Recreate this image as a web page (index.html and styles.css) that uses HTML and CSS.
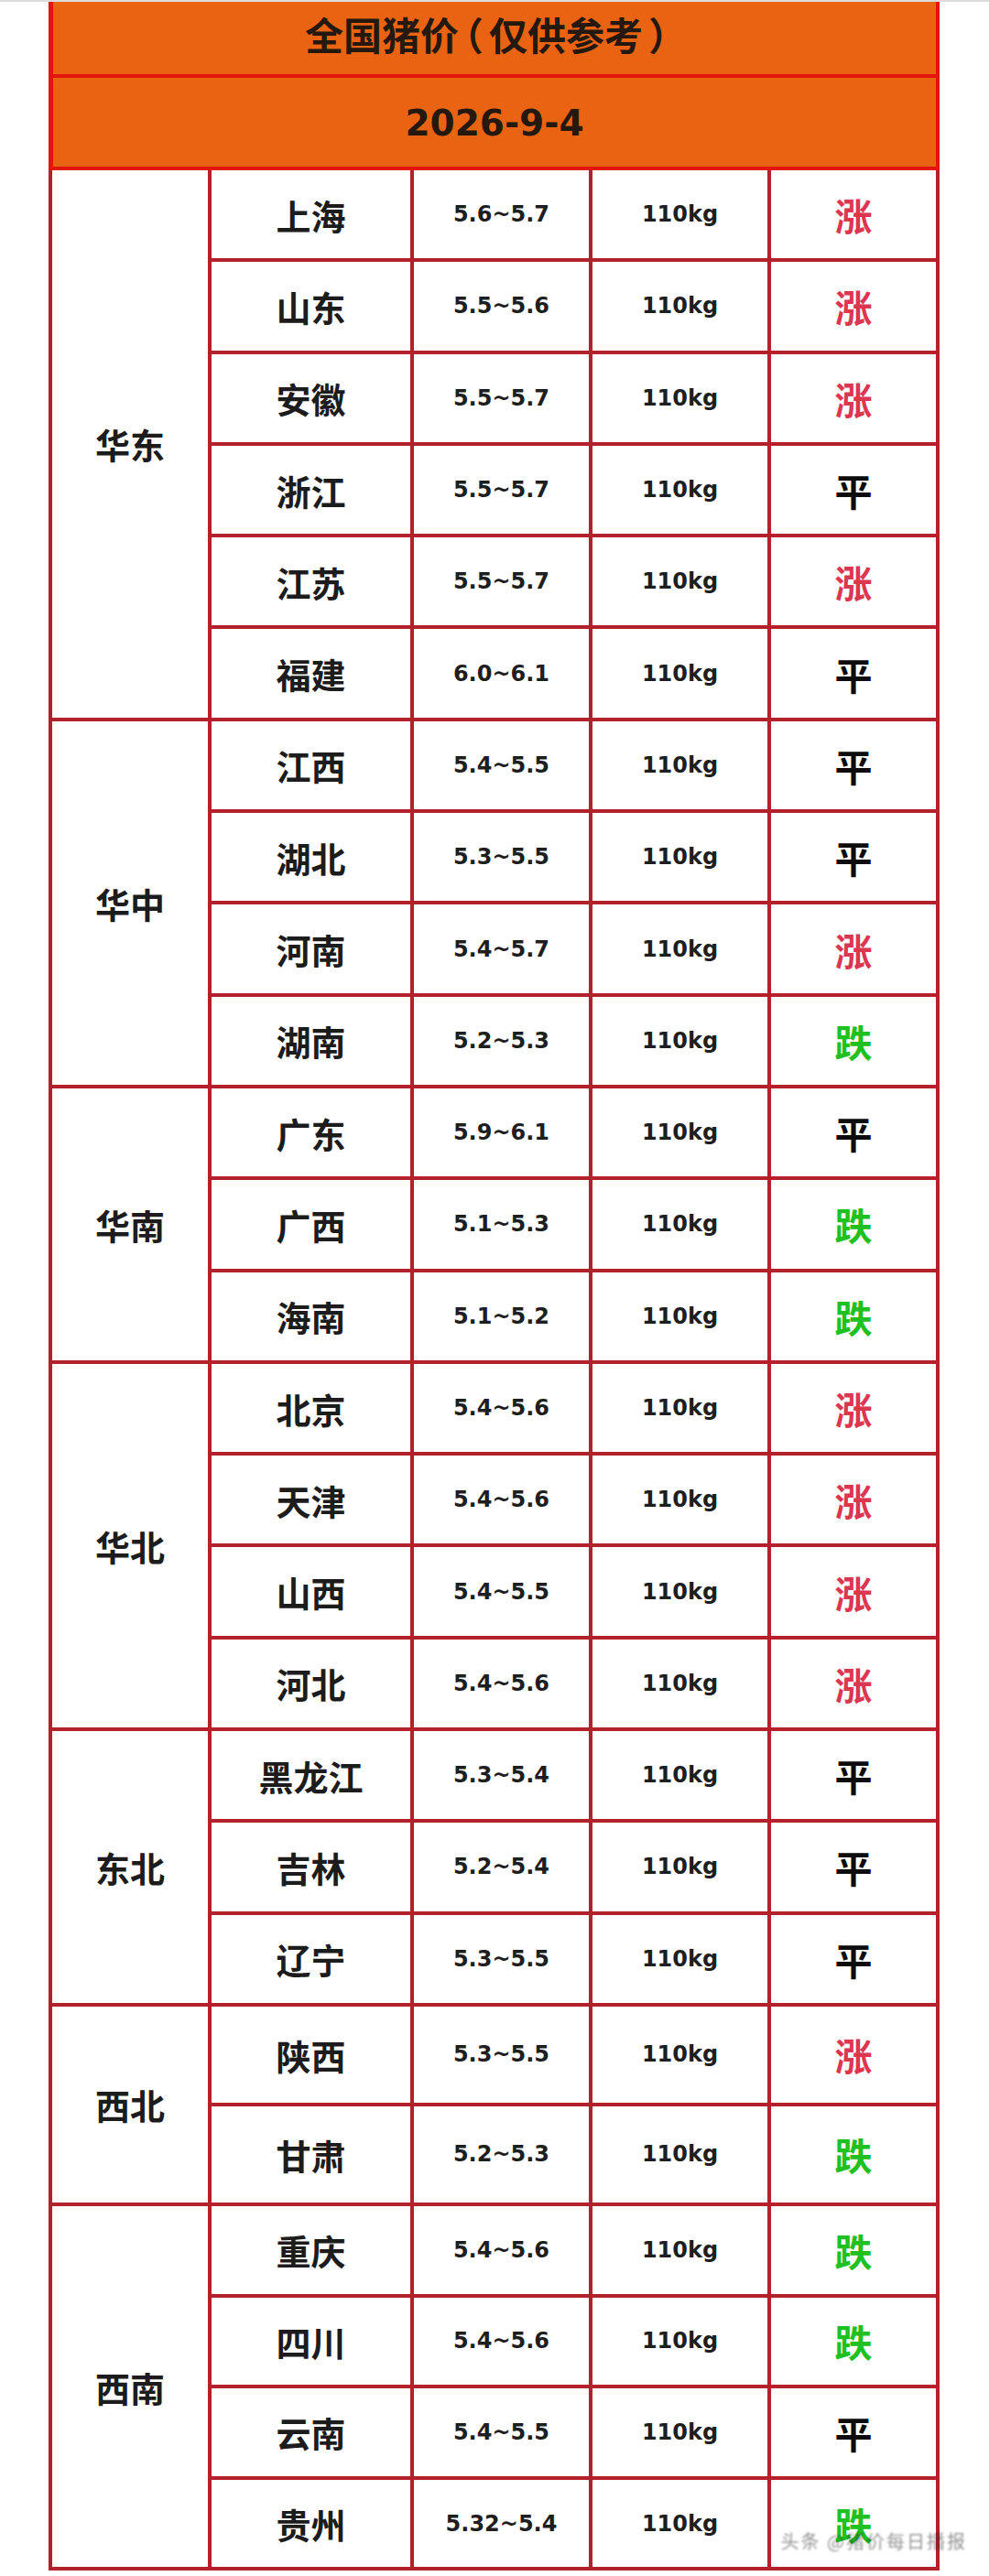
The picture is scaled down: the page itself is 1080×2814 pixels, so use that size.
FILE: index.html
```html
<!DOCTYPE html>
<html lang="zh-CN">
<head>
<meta charset="utf-8">
<title>全国猪价</title>
<link rel="stylesheet" href="styles.css">
</head>
<body>
<div class="topstrip"></div>
<div class="sheet">
  <div class="head">
    <div class="title">全国猪价<span class="pa">（</span>仅供参考<span class="pa">）</span></div>
    <div class="date">2026-9-4</div>
  </div>
  <div class="grid">
    <div class="region r6">华东</div>
    <div class="prov">上海</div><div class="num">5.6~5.7</div><div class="num">110kg</div><div class="st up">涨</div>
    <div class="prov">山东</div><div class="num">5.5~5.6</div><div class="num">110kg</div><div class="st up">涨</div>
    <div class="prov">安徽</div><div class="num">5.5~5.7</div><div class="num">110kg</div><div class="st up">涨</div>
    <div class="prov">浙江</div><div class="num">5.5~5.7</div><div class="num">110kg</div><div class="st flat">平</div>
    <div class="prov">江苏</div><div class="num">5.5~5.7</div><div class="num">110kg</div><div class="st up">涨</div>
    <div class="prov">福建</div><div class="num">6.0~6.1</div><div class="num">110kg</div><div class="st flat">平</div>

    <div class="region r4">华中</div>
    <div class="prov">江西</div><div class="num">5.4~5.5</div><div class="num">110kg</div><div class="st flat">平</div>
    <div class="prov">湖北</div><div class="num">5.3~5.5</div><div class="num">110kg</div><div class="st flat">平</div>
    <div class="prov">河南</div><div class="num">5.4~5.7</div><div class="num">110kg</div><div class="st up">涨</div>
    <div class="prov">湖南</div><div class="num">5.2~5.3</div><div class="num">110kg</div><div class="st down">跌</div>

    <div class="region r3">华南</div>
    <div class="prov">广东</div><div class="num">5.9~6.1</div><div class="num">110kg</div><div class="st flat">平</div>
    <div class="prov">广西</div><div class="num">5.1~5.3</div><div class="num">110kg</div><div class="st down">跌</div>
    <div class="prov">海南</div><div class="num">5.1~5.2</div><div class="num">110kg</div><div class="st down">跌</div>

    <div class="region r4">华北</div>
    <div class="prov">北京</div><div class="num">5.4~5.6</div><div class="num">110kg</div><div class="st up">涨</div>
    <div class="prov">天津</div><div class="num">5.4~5.6</div><div class="num">110kg</div><div class="st up">涨</div>
    <div class="prov">山西</div><div class="num">5.4~5.5</div><div class="num">110kg</div><div class="st up">涨</div>
    <div class="prov">河北</div><div class="num">5.4~5.6</div><div class="num">110kg</div><div class="st up">涨</div>

    <div class="region r3">东北</div>
    <div class="prov">黑龙江</div><div class="num">5.3~5.4</div><div class="num">110kg</div><div class="st flat">平</div>
    <div class="prov">吉林</div><div class="num">5.2~5.4</div><div class="num">110kg</div><div class="st flat">平</div>
    <div class="prov">辽宁</div><div class="num">5.3~5.5</div><div class="num">110kg</div><div class="st flat">平</div>

    <div class="region r2">西北</div>
    <div class="prov">陕西</div><div class="num">5.3~5.5</div><div class="num">110kg</div><div class="st up">涨</div>
    <div class="prov">甘肃</div><div class="num">5.2~5.3</div><div class="num">110kg</div><div class="st down">跌</div>

    <div class="region r4">西南</div>
    <div class="prov">重庆</div><div class="num">5.4~5.6</div><div class="num">110kg</div><div class="st down">跌</div>
    <div class="prov">四川</div><div class="num">5.4~5.6</div><div class="num">110kg</div><div class="st down">跌</div>
    <div class="prov">云南</div><div class="num">5.4~5.5</div><div class="num">110kg</div><div class="st flat">平</div>
    <div class="prov">贵州</div><div class="num">5.32~5.4</div><div class="num">110kg</div><div class="st down">跌</div>
  </div>
  <div class="watermark">头条 @猪价每日播报</div>
</div>
</body>
</html>
```

FILE: styles.css
```css
html, body {
  margin: 0;
  padding: 0;
  background: #ffffff;
}

body {
  width: 1080px;
  font-family: "Noto Sans CJK SC", "Noto Sans", sans-serif;
  color: #1c1c1c;
}

.topstrip {
  height: 2px;
  background: #dcdcdc;
}

.sheet {
  position: relative;
  margin-left: 53px;
  width: 973px;
}

.head {
  display: grid;
  grid-template-rows: 79px 97px;
  row-gap: 4px;
  padding: 0 4px 4px 5px;
  background: #e3150d;
}

.title,
.date {
  display: flex;
  align-items: center;
  justify-content: center;
  background: #ea6312;
  color: #24180f;
  font-weight: 700;
}

.title {
  font-size: 42px;
  padding-bottom: 10px;
  padding-right: 12px;
}

.pa {
  font-feature-settings: "halt";
  margin: 0 6px;
}

.date {
  font-family: "DejaVu Sans", "Noto Sans", sans-serif;
  font-size: 39px;
  padding-top: 2px;
}

.grid {
  display: grid;
  grid-template-columns: 170px 217px 191px 191px 180px;
  grid-template-rows: repeat(20, 96.3px) repeat(2, 105px) repeat(4, 95.6px);
  gap: 4px;
  padding: 0 4px 4px 4px;
  background: #b3222a;
}

.grid > div {
  display: flex;
  align-items: center;
  justify-content: center;
  background: #ffffff;
}

.region {
  grid-column: 1;
  font-size: 38px;
  font-weight: 700;
  color: #1c1c1c;
}

.r6 { grid-row: span 6; }
.r4 { grid-row: span 4; }
.r3 { grid-row: span 3; }
.r2 { grid-row: span 2; }

.prov {
  font-size: 38px;
  font-weight: 700;
  color: #1c1c1c;
}

.num {
  font-family: "DejaVu Sans", "Noto Sans", sans-serif;
  font-size: 24px;
  font-weight: 700;
  color: #1e1e1e;
}

.st {
  font-size: 41px;
  font-weight: 700;
}

.up { color: #dd3650; }
.flat { color: #0c0c0c; }
.down { color: #20c020; }

.watermark {
  position: absolute;
  right: -30px;
  bottom: 18px;
  font-size: 20px;
  color: rgba(40, 40, 40, 0.5);
  filter: blur(1.2px);
  letter-spacing: 2px;
  white-space: nowrap;
}
```
